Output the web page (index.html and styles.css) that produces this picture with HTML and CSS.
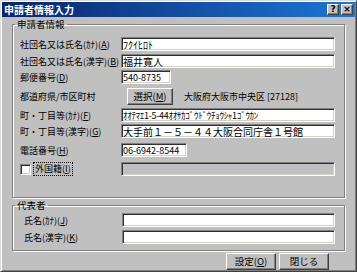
FILE: index.html
```html
<!DOCTYPE html>
<html lang="ja">
<head>
    <meta charset="UTF-8">
    <meta name="viewport" content="width=device-width, initial-scale=1.0">
    <title>申請者情報入力</title>
    <link rel="stylesheet" href="styles.css">
</head>
<body>
    <div class="window">
        <div class="titlebar">
            <span class="title">申請者情報入力</span>
            <div class="title-buttons">
                <span class="title-btn">?</span>
                <span class="title-btn">×</span>
            </div>
        </div>

        <div class="dialog-body">
            <fieldset class="group group-main">
                <legend>申請者情報</legend>

                <div class="row">
                    <label for="nameKana">社団名又は氏名(ｶﾅ)(<u>A</u>)</label>
                    <input type="text" id="nameKana" class="field" value="ﾌｸｲﾋﾛﾄ">
                </div>

                <div class="row">
                    <label for="nameKanji">社団名又は氏名(漢字)(<u>B</u>)</label>
                    <input type="text" id="nameKanji" class="field" value="福井寛人">
                </div>

                <div class="row row-tight">
                    <label for="zip">郵便番号(<u>D</u>)</label>
                    <input type="text" id="zip" class="field field-zip" value="540-8735">
                </div>

                <div class="row row-button">
                    <label>都道府県/市区町村</label>
                    <button type="button" class="btn btn-select">選択(<u>M</u>)</button>
                    <span class="city">大阪府大阪市中央区 [27128]</span>
                </div>

                <div class="row row-after-button">
                    <label for="addrKana">町・丁目等(ｶﾅ)(<u>F</u>)</label>
                    <input type="text" id="addrKana" class="field field-small" value="ｵｵﾃﾏｴ1-5-44ｵｵｻｶｺﾞｳﾄﾞｳﾁｮｳｼｬ1ｺﾞｳｶﾝ">
                </div>

                <div class="row row-tight">
                    <label for="addrKanji">町・丁目等(漢字)(<u>G</u>)</label>
                    <input type="text" id="addrKanji" class="field" value="大手前１－５－４４大阪合同庁舎１号館">
                </div>

                <div class="row row-loose">
                    <label for="tel">電話番号(<u>H</u>)</label>
                    <input type="text" id="tel" class="field field-tel" value="06-6942-8544">
                </div>

                <div class="row row-loose">
                    <label class="check-label" for="foreign">
                        <span class="checkbox" id="foreign"></span>
                        <span class="focus-text">外国籍(<u>I</u>)</span>
                    </label>
                    <input type="text" class="field field-disabled" disabled>
                </div>
            </fieldset>

            <fieldset class="group group-rep">
                <legend>代表者</legend>

                <div class="row">
                    <label for="repKana">氏名(ｶﾅ)(<u>J</u>)</label>
                    <input type="text" id="repKana" class="field">
                </div>

                <div class="row">
                    <label for="repKanji">氏名(漢字)(<u>K</u>)</label>
                    <input type="text" id="repKanji" class="field">
                </div>
            </fieldset>

            <div class="actions">
                <button type="button" class="btn btn-action">設定(<u>O</u>)</button>
                <button type="button" class="btn btn-action">閉じる</button>
            </div>
        </div>
    </div>
</body>
</html>
```

FILE: styles.css
```css
* {
    margin: 0;
    padding: 0;
    box-sizing: border-box;
}

body {
    font-family: "Noto Sans CJK JP", "Noto Sans", sans-serif;
    font-size: 9px;
    color: #000;
    background-color: #c0c0c0;
}

.window {
    width: 357px;
    height: 272px;
    background-color: #c0c0c0;
    border: 1px solid;
    border-color: #dcdcdc #404040 #404040 #dcdcdc;
    box-shadow: inset 1px 1px #fff, inset -1px -1px #808080;
    padding: 1px;
    display: flex;
    flex-direction: column;
}

.titlebar {
    height: 15px;
    display: flex;
    align-items: center;
    justify-content: space-between;
    padding: 0 2px 0 2px;
    background: linear-gradient(to right, #0a246a, #1c76d6);
}

.title {
    color: #fff;
    font-weight: bold;
    font-size: 10px;
    line-height: 15px;
}

.title-buttons {
    display: flex;
    gap: 2px;
}

.title-btn {
    width: 12px;
    height: 11px;
    background-color: #c0c0c0;
    border: 1px solid;
    border-color: #fff #404040 #404040 #fff;
    box-shadow: inset -1px -1px #808080;
    font-family: "DejaVu Sans", sans-serif;
    font-size: 9px;
    font-weight: bold;
    line-height: 9px;
    text-align: center;
}

.dialog-body {
    padding: 1px 10px 0 10px;
    display: flex;
    flex-direction: column;
}

.group {
    border: 1px solid #808080;
    box-shadow: inset 1px 1px #fff, 1px 1px #fff;
    padding: 0 9px 0 7px;
}

.group legend {
    margin-left: -5px;
    padding: 0 2px;
    line-height: 12px;
    font-size: 9.5px;
}

.group-main {
    padding-top: 6px;
    padding-bottom: 20px;
}

.group-rep {
    margin-top: 1px;
    padding: 1px 9px 5px 11px;
}

.group-rep legend {
    margin-left: -9px;
}

.row {
    display: flex;
    align-items: center;
    height: 16px;
    margin-top: 1px;
}

.row:first-of-type {
    margin-top: 0;
}

.row-tight {
    margin-top: 0;
}

.row-loose {
    margin-top: 3px;
}

.row-button {
    height: 18px;
    margin-top: 2px;
}

.row-after-button {
    margin-top: 2px;
}

.row label {
    width: 101px;
    flex-shrink: 0;
    white-space: nowrap;
}

.group-rep .row label {
    width: 98px;
}

.field {
    flex: 1;
    height: 14px;
    min-width: 0;
    font-family: "Noto Sans CJK JP", sans-serif;
    font-size: 10px;
    color: #000;
    background-color: #fff;
    padding: 0 1px;
    border: 1px solid;
    border-color: #808080 #fff #fff #808080;
    box-shadow: inset 1px 1px #303030, inset -1px -1px #d4d0c8;
    outline: none;
}

.field-zip {
    flex: none;
    width: 50px;
    font-size: 9px;
}

.field-tel {
    flex: none;
    width: 66px;
    font-size: 9px;
}

.field-small {
    font-size: 9px;
    letter-spacing: -0.3px;
}

.field-disabled {
    background-color: #c0c0c0;
}

.btn {
    font-family: "Noto Sans CJK JP", sans-serif;
    font-size: 9.5px;
    color: #000;
    background-color: #c0c0c0;
    border: 1px solid;
    border-color: #fff #404040 #404040 #fff;
    box-shadow: inset -1px -1px #808080;
    height: 17px;
    line-height: 13px;
}

.btn-select {
    width: 46px;
    margin-left: 6px;
}

.city {
    margin-left: 11px;
}

.check-label {
    display: flex;
    align-items: center;
    gap: 2px;
}

.checkbox {
    width: 11px;
    height: 11px;
    background-color: #fff;
    border: 1px solid;
    border-color: #808080 #fff #fff #808080;
    box-shadow: inset 1px 1px #303030, inset -1px -1px #d4d0c8;
}

.focus-text {
    border: 1px dotted #000;
    padding: 0 1px;
    line-height: 12px;
}

.actions {
    display: flex;
    justify-content: flex-end;
    gap: 3px;
    margin-top: 2px;
    padding-right: 16px;
}

.btn-action {
    width: 50px;
}
```
